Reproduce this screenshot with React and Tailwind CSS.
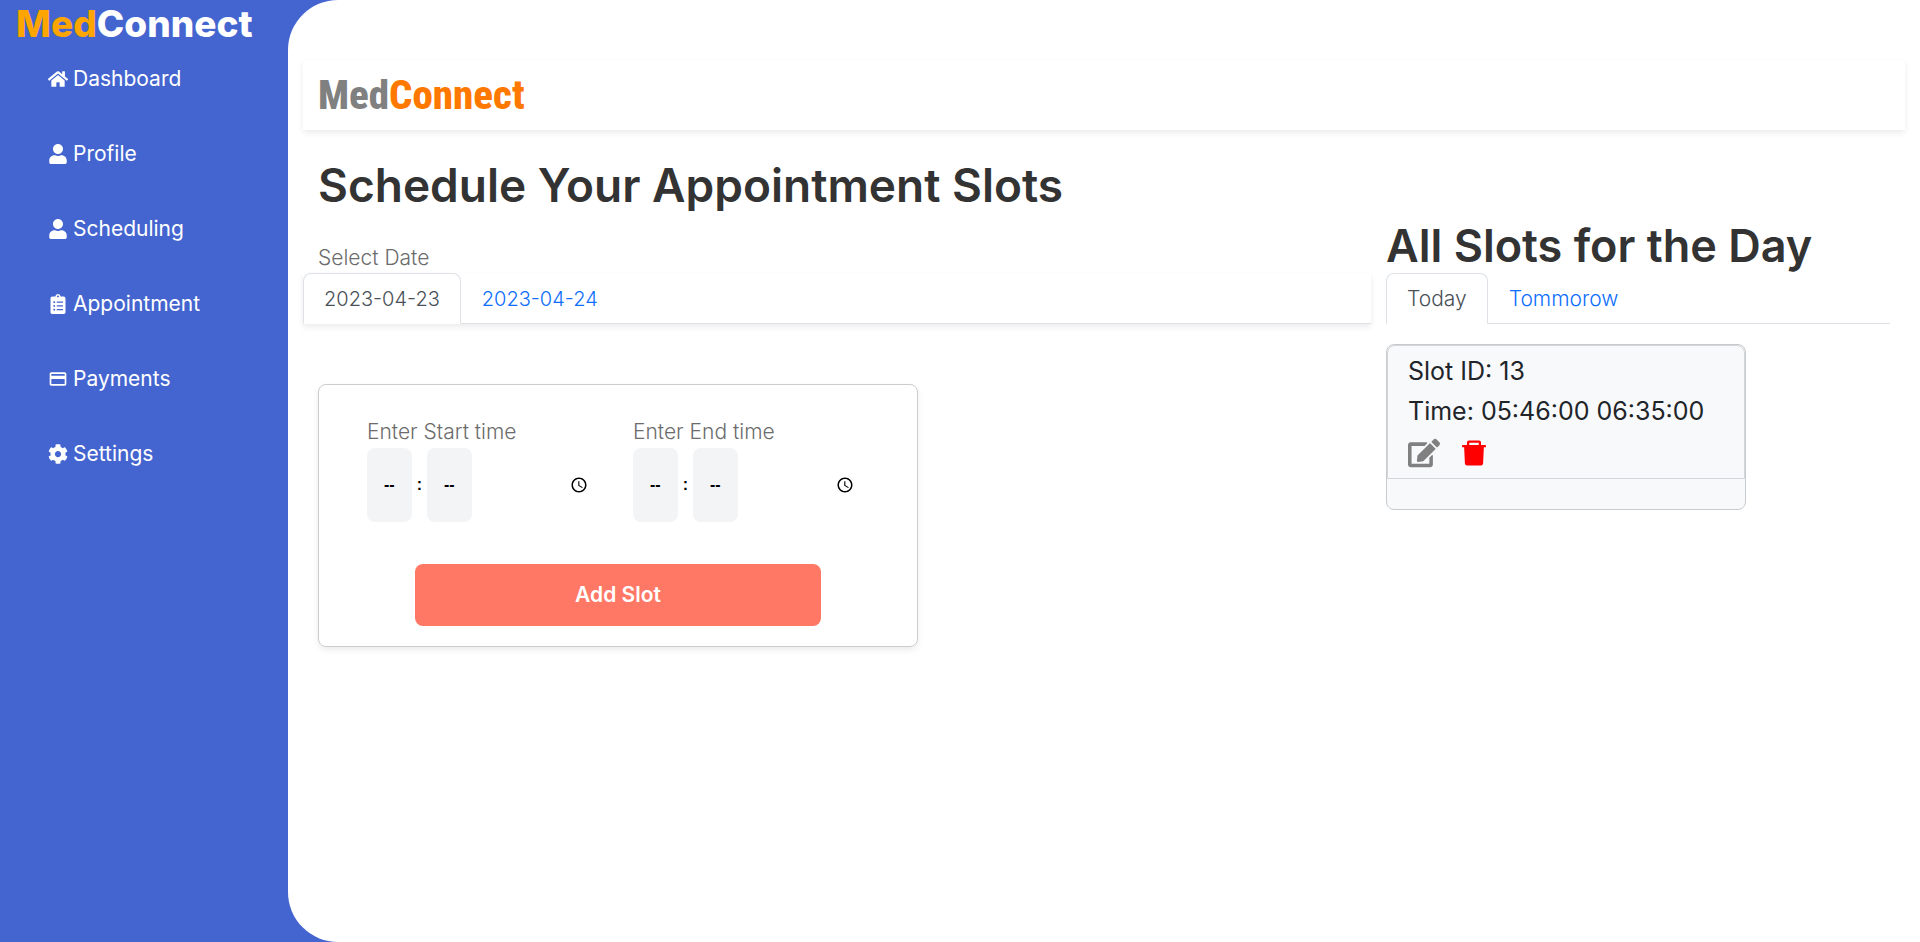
import React, { useState } from "react";
import { FaHome, FaUser, FaClipboardList, FaCog, FaEdit } from "react-icons/fa";
import { MdPayment } from "react-icons/md";
import { AiFillDelete } from "react-icons/ai";

const NAV = [
  { label: "Dashboard", Icon: FaHome },
  { label: "Profile", Icon: FaUser },
  { label: "Scheduling", Icon: FaUser },
  { label: "Appointment", Icon: FaClipboardList },
  { label: "Payments", Icon: MdPayment },
  { label: "Settings", Icon: FaCog },
];

function Tabs({ items, className = "" }) {
  const [active, setActive] = useState(items[0]);
  return (
    <div role="tablist" className={"flex h-[51px] border-b border-[#dee2e6] " + className}>
      {items.map((item) => (
        <button
          key={item}
          type="button"
          role="tab"
          aria-selected={item === active}
          onClick={() => setActive(item)}
          className={
            "h-[51px] rounded-t-lg border px-5 font-light " +
            (item === active
              ? "border-[#dee2e6] border-b-white bg-white text-[#495057]"
              : "border-transparent text-[#0d6efd]")
          }
        >
          {item}
        </button>
      ))}
    </div>
  );
}

function TimeField({ id, label }) {
  return (
    <div className="flex w-[266px] shrink-0 flex-col">
      <label htmlFor={id} className="text-[21px] leading-8 font-light text-[#6c6c6c]">
        {label}
      </label>
      <input
        id={id}
        type="time"
        className="h-[74px] w-[224px] bg-transparent p-0 font-['Liberation_Sans',sans-serif] text-base font-bold text-black outline-none [&::-webkit-calendar-picker-indicator]:size-[18px] [&::-webkit-datetime-edit]:p-0 [&::-webkit-datetime-edit-ampm-field]:hidden [&::-webkit-datetime-edit-fields-wrapper]:p-0 [&::-webkit-datetime-edit-hour-field]:inline-block [&::-webkit-datetime-edit-hour-field]:rounded-lg [&::-webkit-datetime-edit-hour-field]:bg-[#f2f4f5] [&::-webkit-datetime-edit-hour-field]:px-[17px] [&::-webkit-datetime-edit-hour-field]:py-[25px] [&::-webkit-datetime-edit-minute-field]:inline-block [&::-webkit-datetime-edit-minute-field]:rounded-lg [&::-webkit-datetime-edit-minute-field]:bg-[#f2f4f5] [&::-webkit-datetime-edit-minute-field]:px-[17px] [&::-webkit-datetime-edit-minute-field]:py-[25px] [&::-webkit-datetime-edit-text]:px-[5px] [&::-webkit-datetime-edit-text]:font-normal"
      />
    </div>
  );
}

export default function App() {
  return (
    <div className="flex min-h-screen bg-[#4465cf] font-['Inter','Noto_Sans',sans-serif]">
      <aside className="w-72 shrink-0 text-white">
        <div className="pl-4 text-[37px] leading-[48px] font-extrabold">
          <span className="text-[#ffa500]">Med</span>Connect
        </div>
        <nav className="flex flex-col gap-[45px] pt-4 pl-12">
          {NAV.map(({ label, Icon }) => (
            <a key={label} href="#" className="flex items-center gap-[5px] text-[21px] leading-[30px]">
              <Icon className="size-5" />
              {label}
            </a>
          ))}
        </nav>
      </aside>

      <main className="min-w-0 flex-1 rounded-l-[50px] bg-white px-[15px] pt-[60px]">
        <header className="flex h-[70px] items-center px-[15px] shadow-[0_3px_6px_rgba(0,0,0,0.08)]">
          <div className="font-['Roboto_Condensed','Roboto',sans-serif] text-[41px] leading-none font-extrabold text-[#808080]">
            Med<span className="text-[#ff7800]">Connect</span>
          </div>
        </header>

        <div className="flex">
          <section className="min-w-0 flex-1">
            <h1 className="px-[15px] pt-7 text-[46px] leading-[54px] font-semibold text-[#333]">
              Schedule Your Appointment Slots
            </h1>
            <p className="px-[15px] pt-[30px] text-[21px] leading-[31px] font-light text-[#6c6c6c]">Select Date</p>
            <Tabs items={["2023-04-23", "2023-04-24"]} className="text-xl shadow-[0_3px_6px_rgba(0,0,0,0.08)]" />
            <form className="mx-[15px] mt-[60px] flex w-[600px] flex-col rounded-lg border border-[#ccc] px-12 pt-[31px] pb-5 shadow-[0_3px_6px_rgba(0,0,0,0.08)]">
              <div className="flex">
                <TimeField id="start" label="Enter Start time" />
                <TimeField id="end" label="Enter End time" />
              </div>
              <button
                type="button"
                className="mx-12 mt-[42px] h-[62px] rounded-lg bg-[#ff7866] text-[21px] font-semibold text-white"
              >
                Add Slot
              </button>
            </form>
          </section>

          <section className="w-[534px] shrink-0 px-[15px]">
            <h2 className="pt-[88px] text-[45px] leading-[55px] font-semibold whitespace-nowrap text-[#333]">
              All Slots for the Day
            </h2>
            <Tabs items={["Today", "Tommorow"]} className="text-[21px]" />
            <article className="mt-5 w-[360px] rounded-lg border border-[#c8cbcd] bg-[#f8f9fb]">
              <div className="rounded-t-lg border border-[#d3d6d8] px-5 pt-[5px] pb-[9px]">
                <h3 className="text-[25px] leading-10 text-[#212529]">Slot ID: 13</h3>
                <p className="text-[25px] leading-10 whitespace-nowrap text-[#212529]">Time: 05:46:00 06:35:00</p>
                <div className="flex gap-[18px] pt-[6px]">
                  <button type="button" aria-label="Edit slot">
                    <FaEdit className="size-8 text-[#808080]" />
                  </button>
                  <button type="button" aria-label="Delete slot">
                    <AiFillDelete className="size-8 text-[#f00]" />
                  </button>
                </div>
              </div>
              <div className="h-[30px]" />
            </article>
          </section>
        </div>
      </main>
    </div>
  );
}
